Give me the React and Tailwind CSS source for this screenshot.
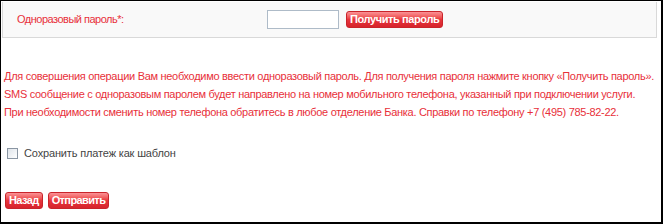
export default function App() {
    const font = { fontFamily: '"Liberation Sans", Arial, sans-serif' };
    const btn = "h-[17px] px-[3px] rounded-[3px] bg-gradient-to-b from-[#fa9195] via-[#e8343c] to-[#d6242c] text-white font-bold leading-none border border-[#c9242b] whitespace-nowrap tracking-[-0.4px]";
    return (
        <div className="w-[663px] h-[224px] bg-white border-t border-l border-r-2 border-b-2 border-black overflow-hidden text-[11px]" style={font}>
            {/* Password row */}
            <div className="ml-[1px] mr-[4px] mt-[1px] h-[36px] bg-[#f9f9f9] border border-t-0 border-[#d9d9d9] flex items-center">
                <span className="w-[264px] pl-[14px] text-[#e8303a] tracking-[-0.5px]">Одноразовый пароль*:</span>
                <input type="text" className="w-[72px] h-[19px] border border-[#aebbc8] bg-white outline-none" />
                <button className={`ml-[7px] ${btn}`}>Получить пароль</button>
            </div>

            {/* Info message */}
            <div className="mt-[29px] pl-[3px] text-[#e8303a] leading-[18px] whitespace-nowrap tracking-[-0.3px]">
                <p>Для совершения операции Вам необходимо ввести одноразовый пароль. Для получения пароля нажмите кнопку «Получить пароль».</p>
                <p>SMS сообщение с одноразовым паролем будет направлено на номер мобильного телефона, указанный при подключении услуги.</p>
                <p>При необходимости сменить номер телефона обратитесь в любое отделение Банка. Справки по телефону +7 (495) 785-82-22.</p>
            </div>

            {/* Save as template */}
            <label className="mt-[24px] ml-[6px] flex items-center gap-[6px] text-[#444] tracking-[-0.15px]">
                <span className="w-[11px] h-[11px] border border-[#8a96a3] bg-gradient-to-br from-[#dfe4ea] to-white" />
                Сохранить платеж как шаблон
            </label>

            {/* Actions */}
            <div className="mt-[30px] ml-[4px] flex gap-[5px]">
                <button className={`${btn} px-[2px] tracking-[-0.6px]`}>Назад</button>
                <button className={`${btn} px-[2px] tracking-[-0.6px]`}>Отправить</button>
            </div>
        </div>
    );
}
